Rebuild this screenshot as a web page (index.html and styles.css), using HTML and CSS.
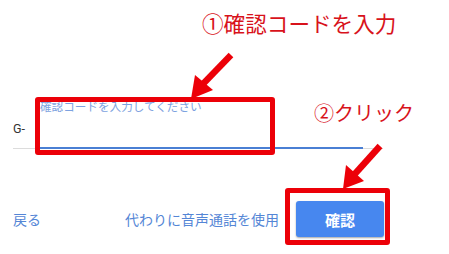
FILE: index.html
```html
<!DOCTYPE html>
<html lang="ja">
<head>
<meta charset="utf-8">
<link rel="stylesheet" href="styles.css">
</head>
<body>
<div class="page">
  <div class="field">
    <span class="prefix">G-</span>
    <div class="input">
      <span class="placeholder">確認コードを入力してください</span>
    </div>
  </div>
  <div class="actions">
    <a class="link">戻る</a>
    <div class="right">
      <a class="link">代わりに音声通話を使用</a>
      <button class="btn">確認</button>
    </div>
  </div>

  <div class="note note1">①確認コードを入力</div>
  <div class="note note2">②クリック</div>
  <div class="hl hl1"></div>
  <div class="hl hl2"></div>
  <svg class="arrows" width="449" height="254" viewBox="0 0 449 254">
    <line x1="231" y1="55" x2="201" y2="86" stroke="#ec0008" stroke-width="6.5"/>
    <polygon points="191,99 195,75 213,90" fill="#ec0008"/>
    <line x1="380" y1="146" x2="353" y2="176" stroke="#ec0008" stroke-width="6.5"/>
    <polygon points="343,189 346,165 364,181" fill="#ec0008"/>
  </svg>
</div>
</body>
</html>
```
FILE: styles.css
```css
html, body {
  margin: 0;
  padding: 0;
  background: #fff;
}
.page {
  position: relative;
  width: 449px;
  height: 254px;
  overflow: hidden;
  font-family: "Noto Sans CJK JP", "Noto Sans", sans-serif;
  padding: 100px 0 0 13px;
  box-sizing: border-box;
}
.field {
  width: 370px;
  display: flex;
  align-items: flex-end;
  border-bottom: 1px solid #dcdcdc;
}
.prefix {
  width: 27px;
  font-family: Roboto, "Noto Sans", sans-serif;
  font-size: 12.5px;
  color: #333;
  line-height: 16px;
  padding-bottom: 11px;
}
.input {
  width: 323px;
  height: 47px;
  border-bottom: 2px solid #4a7fd4;
  margin-bottom: -1px;
}
.placeholder {
  display: block;
  font-size: 11.6px;
  line-height: 14px;
  color: #7da2e0;
  white-space: nowrap;
  margin-top: -1px;
}
.actions {
  width: 371px;
  margin-top: 52px;
  display: flex;
  justify-content: space-between;
  align-items: center;
}
.right {
  display: flex;
  align-items: center;
  gap: 17px;
}
.link {
  font-size: 14px;
  color: #5486d6;
  line-height: 20px;
}
.btn {
  width: 88px;
  height: 36px;
  border: none;
  border-radius: 3px;
  background: #4787ef;
  color: #fff;
  font-family: "Noto Sans CJK JP", sans-serif;
  font-size: 15px;
  font-weight: 700;
  box-shadow: 0 1px 2px rgba(0,0,0,0.35);
  padding: 0;
}
.note {
  position: absolute;
  color: #d8121b;
  font-family: "Noto Sans CJK JP", sans-serif;
  white-space: nowrap;
}
.note1 {
  left: 202px;
  top: 8px;
  font-size: 21.6px;
  line-height: 30px;
}
.note2 {
  left: 314px;
  top: 99px;
  font-size: 20px;
  line-height: 28px;
}
.hl {
  position: absolute;
  border: 5px solid #ec0008;
  border-radius: 3px;
  box-sizing: border-box;
}
.hl1 {
  left: 35px;
  top: 97px;
  width: 240px;
  height: 58px;
}
.hl2 {
  left: 285px;
  top: 188px;
  width: 105px;
  height: 57px;
}
.arrows {
  position: absolute;
  left: 0;
  top: 0;
}
```
